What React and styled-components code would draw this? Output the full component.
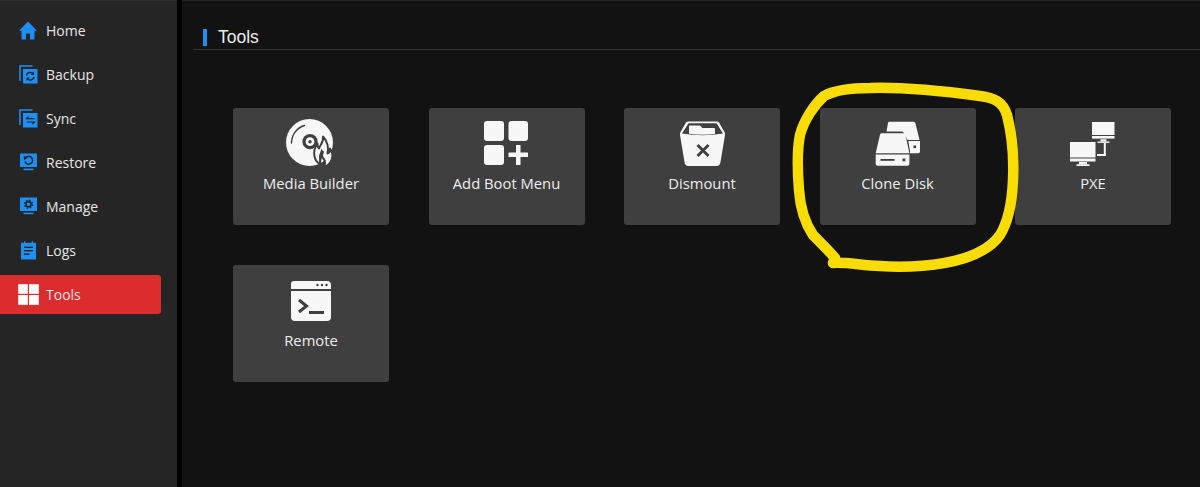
import React from 'react';
import styled, { createGlobalStyle } from 'styled-components';

const GlobalStyle = createGlobalStyle`
  html, body {
    margin: 0;
    padding: 0;
    height: 100%;
    background: #121212;
  }
  #root {
    height: 100%;
  }
`;

const Page = styled.div`
  position: relative;
  display: flex;
  width: 1200px;
  height: 487px;
  overflow: hidden;
  background: #121212;
  font-family: "Open Sans", "Noto Sans", sans-serif;
`;

const Sidebar = styled.nav`
  box-sizing: border-box;
  display: flex;
  flex-direction: column;
  gap: 5px;
  width: 177px;
  padding-top: 10px;
  background: #252525;
  border-top: 1px solid #2e2e2e;
`;

const NavItem = styled.div`
  display: flex;
  align-items: center;
  width: 161px;
  height: 39px;
  padding-left: ${(p) => (p.$active ? 18 : 19)}px;
  gap: ${(p) => (p.$active ? 7 : 8)}px;
  box-sizing: border-box;
  border-radius: 0 3px 3px 0;
  background: ${(p) => (p.$active ? '#db2c2e' : 'transparent')};
  color: #e6e6e6;
  font-size: 14px;
`;

const Gutter = styled.div`
  width: 5px;
  background: #000;
`;

const Main = styled.main`
  flex: 1;
  border-top: 1px solid #242424;
  padding-left: 11px;
`;

const Header = styled.header`
  display: flex;
  align-items: center;
  gap: 11px;
  height: 49px;
  padding: 25px 0 0 10px;
  box-sizing: border-box;
  border-bottom: 1px solid #333;
`;

const HeaderBar = styled.span`
  width: 4px;
  height: 17px;
  background: #1e90f5;
`;

const HeaderTitle = styled.h1`
  margin: 0;
  font: 400 17.5px "Liberation Sans", Arial, sans-serif;
  color: #ececec;
`;

const ToolGrid = styled.div`
  display: grid;
  grid-template-columns: repeat(5, 156px);
  grid-auto-rows: 117px;
  column-gap: 39.5px;
  row-gap: 40px;
  padding: 58px 0 0 40px;
`;

const ToolCard = styled.div`
  display: flex;
  flex-direction: column;
  align-items: center;
  padding-top: 11px;
  box-sizing: border-box;
  border-radius: 3px;
  background: #3f3f3f;
  color: #eeeeee;
  font-size: 14.8px;
`;

const ToolIconBox = styled.div`
  display: flex;
  align-items: center;
  justify-content: center;
  width: 50px;
  height: 50px;
  margin-bottom: 4px;
`;

const ToolLabel = styled.span`
  line-height: 20px;
`;

const Svg = styled.svg`
  display: block;
  flex: none;
  width: ${(p) => p.$size}px;
  height: ${(p) => p.$size}px;
`;

const Marker = styled.svg`
  position: absolute;
  left: 0;
  top: 0;
  pointer-events: none;
`;

const BLUE = '#1e90f5';
const BG = '#252525';
const CARD = '#3f3f3f';
const WHITE = '#f7f7f7';

const HomeIcon = () => (
  <Svg $size={19} viewBox="0 0 19 19">
    <path fill={BLUE} d="M9 0.5 L18 9.8 H15.5 V18.5 H11 V12.5 H7 V18.5 H2.5 V9.8 H0 Z" />
  </Svg>
);

const StackBase = () => (
  <>
    <path fill="none" stroke={BLUE} strokeWidth="1.5" d="M1 16 V1 H13.5" />
    <rect x="4" y="4" width="14.5" height="14.5" fill={BLUE} />
  </>
);

const BackupIcon = () => (
  <Svg $size={19} viewBox="0 0 19 19">
    <StackBase />
    <g fill="none" stroke={BG} strokeWidth="1.5">
      <path d="M7.4 10.5 A3.9 3.9 0 0 1 14 8.6" />
      <path d="M15.1 12 A3.9 3.9 0 0 1 8.6 14" />
    </g>
    <path fill={BG} d="M15 6.5 V10 H11.7 Z M7.5 16 V12.5 H10.8 Z" />
  </Svg>
);

const SyncIcon = () => (
  <Svg $size={19} viewBox="0 0 19 19">
    <StackBase />
    <g fill="none" stroke={BG} strokeWidth="1.2">
      <path d="M15.5 9.7 H7.5 L9.5 7.8" />
      <path d="M7.5 13 H15.5 L13.5 15" />
    </g>
  </Svg>
);

const Monitor = ({ children }) => (
  <Svg $size={19} viewBox="0 0 19 19">
    <rect x="1" y="0.5" width="17" height="13.5" fill={BLUE} />
    <rect x="4.5" y="15.6" width="10" height="1.6" fill={BLUE} />
    {children}
  </Svg>
);

const RestoreIcon = () => (
  <Monitor>
    <path fill="none" stroke={BG} strokeWidth="1.5" d="M6.2 5.5 A3.9 3.9 0 1 1 6 8.5" />
    <path fill={BG} d="M4.5 3 L8.8 4.6 L5.2 7.2 Z" />
  </Monitor>
);

const ManageIcon = () => (
  <Monitor>
    <circle cx="9.5" cy="7.2" r="2.6" fill="none" stroke={BG} strokeWidth="1.6" />
    <circle cx="9.5" cy="7.2" r="4" fill="none" stroke={BG} strokeWidth="1.3" strokeDasharray="1.6 1.54" />
  </Monitor>
);

const LogsIcon = () => (
  <Svg $size={19} viewBox="0 0 19 19">
    <path
      fill={BLUE}
      d="M2.5 1.8 H5 V0.3 H6.3 V1.8 H12.7 V0.3 H14 V1.8 H16.5 Q17 1.8 17 2.3 V18 Q17 18.5 16.5 18.5 H2.5 Q2 18.5 2 18 V2.3 Q2 1.8 2.5 1.8 Z"
    />
    <g fill={BG}>
      <rect x="5" y="5.6" width="9" height="1.4" />
      <rect x="5" y="9" width="9" height="1.4" />
      <rect x="5" y="12.4" width="5.5" height="1.4" />
    </g>
  </Svg>
);

const ToolsIcon = () => (
  <Svg $size={21} viewBox="0 0 21 21">
    <g fill="#ffffff">
      <rect x="0.2" y="0.2" width="9.6" height="9.6" />
      <rect x="11" y="0.2" width="9.8" height="9.6" />
      <rect x="0.2" y="11" width="9.6" height="9.8" />
      <rect x="11" y="11" width="9.8" height="9.8" />
    </g>
  </Svg>
);

const MediaIcon = () => (
  <Svg $size={50} viewBox="0 0 50 50">
    <circle cx="23.5" cy="23.5" r="23.5" fill={WHITE} />
    <path fill="none" stroke={CARD} strokeWidth="1.4" strokeLinecap="round" d="M5.5 24 A18 18 0 0 1 18.5 6.5" />
    <circle cx="24" cy="22.7" r="7.6" fill={CARD} />
    <circle cx="24" cy="22.7" r="4.4" fill={WHITE} />
    <circle cx="24" cy="22.7" r="1.7" fill={CARD} />
    <g transform="translate(2 -0.5)">
      <path
        fill={WHITE}
        stroke={CARD}
        strokeWidth="2"
        strokeLinejoin="round"
        d="M35 18 C36 24 32 26 31 30 C29 28 29.5 26 29.5 25 C26 30 25.5 34 26.5 38 C27.5 42 30 45 33 46 C31 43 32 40 34 37 C34.5 40 36.5 40.5 37 43 C37.5 45 37 47 36 49 C40 47 43 44 44 40 C45 36 44 33 42 30 C42 33 41 34.5 39.5 35 C41 30 39.5 22 35 18 Z"
      />
      <path fill={CARD} d="M33 30 C33.5 33 31 35 31 38 C31 41 32 42 33 43 C33 39 36 36 36 33 C35 32.5 34 31.5 33 30 Z" />
    </g>
  </Svg>
);

const AddBootIcon = () => (
  <Svg $size={46} viewBox="0 0 46 46">
    <g fill={WHITE}>
      <rect x="0" y="0" width="20" height="20" rx="3" />
      <rect x="24.5" y="0" width="19.5" height="20" rx="3" />
      <rect x="0" y="24" width="20" height="20" rx="3" />
      <rect x="32" y="24" width="4.5" height="20" rx="0.5" />
      <rect x="24.5" y="31.5" width="19.5" height="4.5" rx="0.5" />
    </g>
  </Svg>
);

const DismountIcon = () => (
  <Svg $size={46} viewBox="0 0 46 46">
    <path
      fill={WHITE}
      d="M9 0.5 H38 Q39 0.5 40 1.5 L46 12 V14 L41.5 41 Q41 45 37.5 45 H9.5 Q6 45 5.5 41 L1 14 V12 L7 1.5 Q8 0.5 9 0.5 Z"
    />
    <path fill={CARD} d="M9.5 2.2 H37.5 L44 12.5 Q23.5 16 3 12.5 Z" />
    <path fill={WHITE} d="M10 12.8 L10 5.5 Q10 4.5 11 4.5 H21 L23.5 7 H35 Q36 7 36 8 V13 Q23 14.6 10 12.8 Z" />
    <path fill="none" stroke={CARD} strokeWidth="2.8" d="M18.5 24 L29.5 35 M29.5 24 L18.5 35" />
  </Svg>
);

const CloneIcon = () => (
  <Svg $size={46} viewBox="0 0 46 46">
    <g fill={WHITE}>
      <path d="M14.5 0.8 H38.5 Q40 0.8 40.5 2.5 L44.5 19 H32.5 L28.2 11.2 Q27.8 10.4 27 10.4 H11.5 L13 2 Q13.2 0.8 14.5 0.8 Z" />
      <path d="M33.3 20 H45 V30.5 Q45 32.3 43 32.3 H35 L35 30 Z" />
      <path d="M6.5 12.3 H28.5 Q30 12.3 30.4 13.8 L34.4 32.3 H0.7 L5 13.8 Q5.3 12.3 6.5 12.3 Z" />
      <path d="M0.7 33.4 H34.4 V43 Q34.4 44.8 32.4 44.8 H2.7 Q0.7 44.8 0.7 43 Z" />
    </g>
    <g fill={CARD}>
      <rect x="5.5" y="38" width="14" height="1.8" />
      <rect x="27.5" y="37.5" width="2.8" height="2.8" />
      <rect x="38.5" y="24.5" width="2.6" height="2.6" />
    </g>
  </Svg>
);

const PxeIcon = () => (
  <Svg $size={46} viewBox="0 0 46 46">
    <g fill={WHITE}>
      <rect x="22" y="1" width="22.5" height="13" />
      <rect x="22" y="15" width="22.5" height="2.6" />
      <rect x="30.5" y="18.3" width="6" height="2.2" />
      <rect x="27.5" y="20.5" width="12" height="1.4" />
      <rect x="33.8" y="22" width="2" height="13" />
      <rect x="27" y="33" width="8.8" height="2" />
      <rect x="0" y="21" width="25.5" height="15.5" />
      <rect x="0" y="37.5" width="25.5" height="3" />
      <rect x="9" y="41" width="8" height="2.2" />
      <rect x="6.5" y="43.2" width="13" height="1.8" />
    </g>
  </Svg>
);

const RemoteIcon = () => (
  <Svg $size={42} viewBox="0 0 42 42">
    <path fill={WHITE} d="M4 1 H37 Q41 1 41 5 V9 H1 V4 Q1 1 4 1 Z" />
    <path fill={WHITE} d="M1 11 H41 V37 Q41 41 37 41 H5 Q1 41 1 37 Z" />
    <g fill={CARD}>
      <circle cx="27.5" cy="5" r="1.2" />
      <circle cx="32" cy="5" r="1.2" />
      <circle cx="36.5" cy="5" r="1.2" />
      <rect x="19" y="31" width="15" height="3" />
    </g>
    <path fill="none" stroke={CARD} strokeWidth="3" d="M9 20 L16.5 26 L9 32" />
  </Svg>
);

const navItems = [
  { label: 'Home', icon: <HomeIcon /> },
  { label: 'Backup', icon: <BackupIcon /> },
  { label: 'Sync', icon: <SyncIcon /> },
  { label: 'Restore', icon: <RestoreIcon /> },
  { label: 'Manage', icon: <ManageIcon /> },
  { label: 'Logs', icon: <LogsIcon /> },
  { label: 'Tools', icon: <ToolsIcon />, active: true },
];

const tools = [
  { label: 'Media Builder', icon: <MediaIcon /> },
  { label: 'Add Boot Menu', icon: <AddBootIcon /> },
  { label: 'Dismount', icon: <DismountIcon /> },
  { label: 'Clone Disk', icon: <CloneIcon /> },
  { label: 'PXE', icon: <PxeIcon /> },
  { label: 'Remote', icon: <RemoteIcon /> },
];

export default function App() {
  return (
    <Page>
      <GlobalStyle />
      <Sidebar>
        {navItems.map((item) => (
          <NavItem key={item.label} $active={item.active}>
            {item.icon}
            {item.label}
          </NavItem>
        ))}
      </Sidebar>
      <Gutter />
      <Main>
        <Header>
          <HeaderBar />
          <HeaderTitle>Tools</HeaderTitle>
        </Header>
        <ToolGrid>
          {tools.map((tool) => (
            <ToolCard key={tool.label}>
              <ToolIconBox>{tool.icon}</ToolIconBox>
              <ToolLabel>{tool.label}</ToolLabel>
            </ToolCard>
          ))}
        </ToolGrid>
      </Main>
      {/* hand drawn highlight round Clone Disk */}
      <Marker width="1200" height="487" viewBox="0 0 1200 487">
        <path
          fill="none"
          stroke="#f8dc00"
          strokeWidth="10.5"
          strokeLinecap="round"
          strokeLinejoin="round"
          d="M824 96 C835 90 850 88 870 88 C900 87 950 92 980 96 C995 98 1003 102 1007 115 C1012 135 1014 160 1013 180 C1012 205 1008 222 1000 235 C993 245 980 253 965 258 C940 266 905 268 880 266 C860 265 845 262 833 263 L835 258 C828 250 820 242 813 235 C803 220 800 205 799 190 C797 165 797 150 800 135 C804 120 814 105 824 96 Z"
        />
      </Marker>
    </Page>
  );
}
